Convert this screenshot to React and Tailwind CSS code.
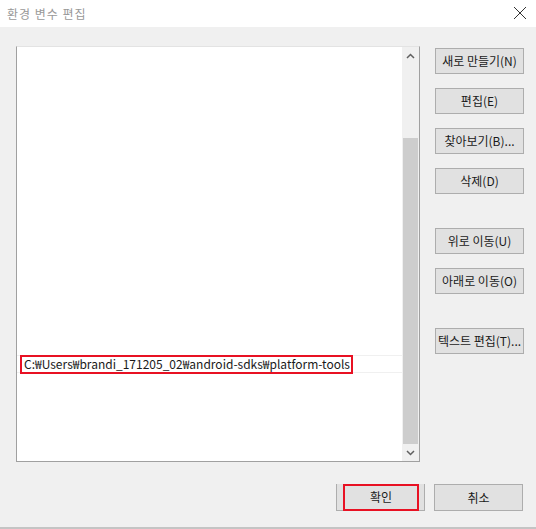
const sideButtons = [
  { label: '새로 만들기(N)', gap: false },
  { label: '편집(E)', gap: false },
  { label: '찾아보기(B)...', gap: false },
  { label: '삭제(D)', gap: false },
  { label: '위로 이동(U)', gap: true },
  { label: '아래로 이동(O)', gap: false },
  { label: '텍스트 편집(T)...', gap: true },
];

const Btn = ({ label, className = '', children }) => (
  <button
    className={`h-[26px] bg-[#e1e1e1] border border-[#adadad] text-[12px] text-[#1a1a1a] leading-none flex items-center justify-center ${className}`}
  >
    {children || label}
  </button>
);

const App = () => {
  return (
    <div className="w-[536px] h-[529px] bg-[#f0f0f0] flex flex-col font-['Noto_Sans_CJK_KR','Noto_Sans',sans-serif]">
      <div className="h-[27px] bg-white flex items-center justify-between pl-[7px] pr-[9px] shrink-0">
        <span className="text-[12px] text-[#999999] tracking-[1px]">환경 변수 편집</span>
        <svg width="14" height="14" viewBox="0 0 14 14" className="mt-[-2px]">
          <path d="M1 1 L13 13 M13 1 L1 13" stroke="#333" strokeWidth="1" fill="none" />
        </svg>
      </div>

      <div className="flex pt-[19px] pl-[16px] shrink-0">
        <div className="w-[404px] h-[416px] flex bg-white border border-[#a0a0a0] border-t-[#e3e3e3]">
          <div className="flex-1 flex flex-col">
            <div className="h-[308px]" />
            <div className="h-[18px] border-y border-[#f0f0f0] flex items-center pl-[3px]">
              <span className="h-[19px] w-[333px] border-2 border-[#e81123] flex items-center pl-[2px] text-[12px] text-[#1a1a1a] whitespace-nowrap">
                C:₩Users₩brandi_171205_02₩android-sdks₩platform-tools
              </span>
            </div>
          </div>
          <div className="w-[17px] bg-[#f0f0f0] flex flex-col">
            <div className="h-[17px] flex items-center justify-center">
              <svg width="9" height="6" viewBox="0 0 9 6">
                <path d="M1 5 L4.5 1.5 L8 5" stroke="#606060" strokeWidth="1.5" fill="none" />
              </svg>
            </div>
            <div className="flex-1 flex flex-col">
              <div className="h-[74px]" />
              <div className="h-[306px] mx-[1px] bg-[#cdcdcd]" />
            </div>
            <div className="h-[17px] flex items-center justify-center">
              <svg width="9" height="6" viewBox="0 0 9 6">
                <path d="M1 1 L4.5 4.5 L8 1" stroke="#606060" strokeWidth="1.5" fill="none" />
              </svg>
            </div>
          </div>
        </div>

        <div className="flex flex-col ml-[15px] pt-[2px] gap-[14px]">
          {sideButtons.map((b) => (
            <Btn key={b.label} label={b.label} className={`w-[89px] ${b.gap ? 'mt-[20px]' : ''}`} />
          ))}
        </div>
      </div>

      <div className="flex justify-end gap-[9px] pr-[13px] mt-[22px] shrink-0">
        <Btn className="w-[89px] h-[27px] justify-start pl-[6px] border-t-0">
          <span className="w-[76px] h-[27px] border-2 border-[#e81123] flex items-center justify-center">확인</span>
        </Btn>
        <Btn label="취소" className="w-[89px] h-[27px]" />
      </div>

      <div className="flex-1" />
      <div className="h-[2px] bg-[#c4c4c4] shrink-0" />
    </div>
  );
};

export default App;
